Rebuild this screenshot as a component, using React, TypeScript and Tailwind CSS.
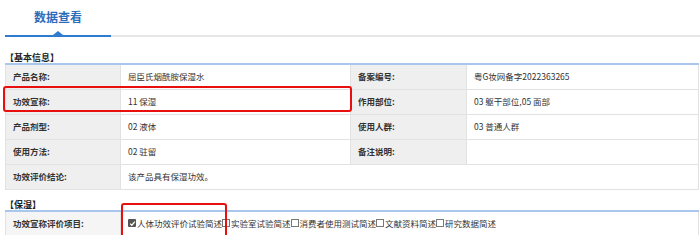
const font = { fontFamily: '"Noto Sans CJK SC", "Liberation Sans", sans-serif' }

function Label({ children }: { children: React.ReactNode }) {
  return (
    <td className="bg-[#efefef] border border-[#e2e2e2] px-[7px] font-bold text-[#333] whitespace-nowrap">
      {children}
    </td>
  )
}

function Value({ children, span }: { children?: React.ReactNode; span?: number }) {
  return (
    <td colSpan={span} className="bg-white border border-[#e2e2e2] px-[7px] text-[#333] whitespace-nowrap">
      {children}
    </td>
  )
}

function Box({ checked }: { checked?: boolean }) {
  if (checked) {
    return (
      <span className="inline-flex items-center justify-center w-[8px] h-[8px] bg-[#555] rounded-[1px] mr-[1px] align-middle">
        <svg viewBox="0 0 8 8" className="w-[7px] h-[7px]">
          <path d="M1.3 4.2 L3.2 6 L6.7 1.9" fill="none" stroke="#fff" strokeWidth="1.4" />
        </svg>
      </span>
    )
  }
  return <span className="inline-block w-[8px] h-[8px] border border-[#777] bg-white mr-[1px] align-middle" />
}

export default function App() {
  const items = ["实验室试验简述", "消费者使用测试简述", "文献资料简述", "研究数据简述"]
  return (
    <div className="relative w-[700px] h-[235px] bg-white overflow-hidden text-[8.5px]" style={font}>
      {/* tab header */}
      <div className="flex items-end h-[37px] pl-[5px]">
        <div className="relative w-[106px] h-full flex items-center justify-center border-b-2 border-[#2f7bd0]">
          <span className="text-[12px] font-bold text-[#2d6cba] leading-none mt-[-1px]">数据查看</span>
          <span className="absolute left-1/2 -translate-x-1/2 bottom-0 w-0 h-0 border-l-[5px] border-r-[5px] border-b-[4px] border-l-transparent border-r-transparent border-b-[#2f7bd0]" />
        </div>
        <div className="flex-1 border-b-2 border-[#e6e6e6]" />
      </div>

      <div className="px-[5px]">
        <div className="mt-[15px] h-[11px] leading-[11px] font-bold text-[#222] text-[9px]">【基本信息】</div>
        <table className="w-[694px] border-collapse table-fixed border-t-2 border-t-[#a9c6ec]">
          <colgroup>
            <col className="w-[115px]" />
            <col className="w-[230px]" />
            <col className="w-[116px]" />
            <col />
          </colgroup>
          <tbody>
            <tr className="h-[25px]">
              <Label>产品名称:</Label>
              <Value>屈臣氏烟酰胺保湿水</Value>
              <Label>备案编号:</Label>
              <Value>粤G妆网备字2022363265</Value>
            </tr>
            <tr className="h-[25px]">
              <Label>功效宣称:</Label>
              <Value>11 保湿</Value>
              <Label>作用部位:</Label>
              <Value>03 躯干部位,05 面部</Value>
            </tr>
            <tr className="h-[25px]">
              <Label>产品剂型:</Label>
              <Value>02 液体</Value>
              <Label>使用人群:</Label>
              <Value>03 普通人群</Value>
            </tr>
            <tr className="h-[25px]">
              <Label>使用方法:</Label>
              <Value>02 驻留</Value>
              <Label>备注说明:</Label>
              <Value />
            </tr>
            <tr className="h-[25px]">
              <Label>功效评价结论:</Label>
              <Value span={3}>该产品具有保湿功效。</Value>
            </tr>
          </tbody>
        </table>

        <div className="mt-[9px] h-[11px] leading-[11px] font-bold text-[#222] text-[9px]">【保湿】</div>
        <table className="w-[694px] border-collapse table-fixed border-t-2 border-t-[#a9c6ec]">
          <colgroup>
            <col className="w-[115px]" />
            <col />
          </colgroup>
          <tbody>
            <tr className="h-[25px]">
              <td className="bg-[#f5f5f5] border border-[#e2e2e2] px-[7px] font-bold text-[#333] whitespace-nowrap">
                功效宣称评价项目:
              </td>
              <td className="bg-white border border-[#e2e2e2] px-[7px] text-[#333] whitespace-nowrap">
                <span className="inline-flex items-center">
                  <Box checked />
                  人体功效评价试验简述
                  {items.map((t) => (
                    <span key={t} className="inline-flex items-center">
                      <Box />
                      {t}
                    </span>
                  ))}
                </span>
              </td>
            </tr>
          </tbody>
        </table>
      </div>

      {/* red highlight boxes */}
      <div className="absolute left-[3px] top-[86px] w-[349px] h-[26px] border-[2.5px] border-[#e8100f] rounded-[3px]" />
      <div className="absolute left-[121px] top-[203px] w-[106px] h-[40px] border-[2.5px] border-[#e8100f] rounded-[3px]" />
    </div>
  )
}
